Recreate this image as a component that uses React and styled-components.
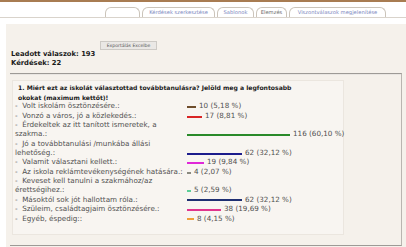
import React from "react";
import styled, { createGlobalStyle } from "styled-components";

const Global = createGlobalStyle`
  html, body { margin: 0; padding: 0; background: #ffffff; }
  body { font-family: "DejaVu Sans", Verdana, sans-serif; overflow: hidden; }
`;

const Page = styled.div`
  width: 406px;
  height: 247px;
  overflow: hidden;
  border-top: 2px solid #a87c52;
  box-sizing: border-box;
  background: #ffffff;
`;

const TabBar = styled.div`
  display: flex;
  justify-content: flex-end;
  align-items: flex-end;
  gap: 2px;
  height: 15px;
  padding-right: 20px;
  border-bottom: 1px solid #d9d3cb;
`;

const Tab = styled.div`
  width: ${(p) => p.$w}px;
  height: 10px;
  box-sizing: border-box;
  border: 1px solid #cbc4ba;
  border-bottom: none;
  border-radius: 6px 6px 0 0;
  background: #ffffff;
  color: ${(p) => (p.$active ? "#6a6a6a" : "#7a86bd")};
  font-size: 5.2px;
  line-height: 9px;
  text-align: center;
  white-space: nowrap;
`;

const Panel = styled.div`
  margin: 6px 0 0 6px;
  background: #f5f1eb;
  padding: 17px 0 0 4px;
  height: 240px;
`;

const Header = styled.div`
  display: flex;
  flex-direction: column;
  align-items: flex-start;
`;

const ExportButton = styled.div`
  margin-left: 90px;
  width: 57px;
  height: 9px;
  box-sizing: border-box;
  background: #eae8e5;
  border: 1px solid #cdcac5;
  color: #555;
  font-size: 4.6px;
  line-height: 7px;
  text-align: center;
  white-space: nowrap;
`;

const Count = styled.div`
  font-weight: bold;
  font-size: 6.8px;
  line-height: 9px;
  color: #1a1a1a;
  padding-left: 1px;
`;

const Section = styled.div`
  margin-top: 5px;
  margin-right: 4px;
  border-top: 1px solid #9d9a96;
  border-right: 1px solid #b9b5b0;
  border-bottom: 1px solid #9d9a96;
  box-shadow: inset 0 1px 0 #e9e6e2;
  padding: 6px 0 10px 2px;
`;

const QuestionBox = styled.div`
  width: 332px;
  box-sizing: border-box;
  background: #f8f5f1;
  border: 1px solid #ebe6df;
  padding: 2px 0 10px 2px;
`;

const Title = styled.div`
  font-weight: bold;
  font-size: 6.1px;
  line-height: 9.5px;
  color: #1a1a1a;
  padding-left: 3px;
`;

const Row = styled.div`
  display: flex;
  align-items: flex-end;
  padding: 0.3px 0;
`;

const Label = styled.div`
  width: 172px;
  flex: none;
  font-size: 7.2px;
  line-height: 8.9px;
  color: #505050;
  white-space: pre;
`;

const BarCell = styled.div`
  display: flex;
  align-items: center;
  height: 8.9px;
  gap: 3px;
`;

const Bar = styled.div`
  height: 2px;
  background: ${(p) => p.$color};
  margin-top: 1px;
`;

const Value = styled.span`
  font-size: 7.2px;
  line-height: 8.9px;
  color: #505050;
  white-space: nowrap;
`;

const tabs = [
  { label: "", w: 35 },
  { label: "Kérdések szerkesztése", w: 73 },
  { label: "Sablonok", w: 37 },
  { label: "Elemzés", w: 31, active: true },
  { label: "Viszontválaszok megjelenítése", w: 97 },
];

const rows = [
  { text: "Volt iskolám ösztönzésére.:", n: 10, pct: "5,18", color: "#6e4d2c" },
  { text: "Vonzó a város, jó a közlekedés.:", n: 17, pct: "8,81", color: "#d92525" },
  { text: "Érdekeltek az itt tanított ismeretek, a\nszakma.:", n: 116, pct: "60,10", color: "#2a8a2a" },
  { text: "Jó a továbbtanulási /munkába állási\nlehetőség.:", n: 62, pct: "32,12", color: "#1c1c8c" },
  { text: "Valamit választani kellett.:", n: 19, pct: "9,84", color: "#e028d8" },
  { text: "Az iskola reklámtevékenységének hatására.:", n: 4, pct: "2,07", color: "#8a8a80" },
  { text: "Keveset kell tanulni a szakmához/az\nérettségihez.:", n: 5, pct: "2,59", color: "#5ccf98" },
  { text: "Másoktól sok jót hallottam róla.:", n: 62, pct: "32,12", color: "#1f2f72" },
  { text: "Szüleim, családtagjaim ösztönzésére.:", n: 38, pct: "19,69", color: "#e0358e" },
  { text: "Egyéb, éspedig::", n: 8, pct: "4,15", color: "#f0a038" },
];

export default function App() {
  return (
    <Page>
      <Global />
      <TabBar>
        {tabs.map((t, i) => (
          <Tab key={i} $w={t.w} $active={t.active}>
            {t.label}
          </Tab>
        ))}
      </TabBar>
      <Panel>
        <Header>
          <ExportButton>Exportálás Excelbe</ExportButton>
          <Count>Leadott válaszok: 193</Count>
          <Count>Kérdések: 22</Count>
        </Header>
        <Section>
          <QuestionBox>
            <Title>
              1. Miért ezt az iskolát választottad továbbtanulásra? Jelöld meg a legfontosabb
              <br />
              okokat (maximum kettőt)!
            </Title>
            {rows.map((r, i) => (
              <Row key={i}>
                <Label>{"-\u00a0 " + r.text}</Label>
                <BarCell>
                  <Bar $color={r.color} style={{ width: `${Math.round(r.n * 0.89)}px` }} />
                  <Value>
                    {r.n} ({r.pct} %)
                  </Value>
                </BarCell>
              </Row>
            ))}
          </QuestionBox>
        </Section>
      </Panel>
    </Page>
  );
}
